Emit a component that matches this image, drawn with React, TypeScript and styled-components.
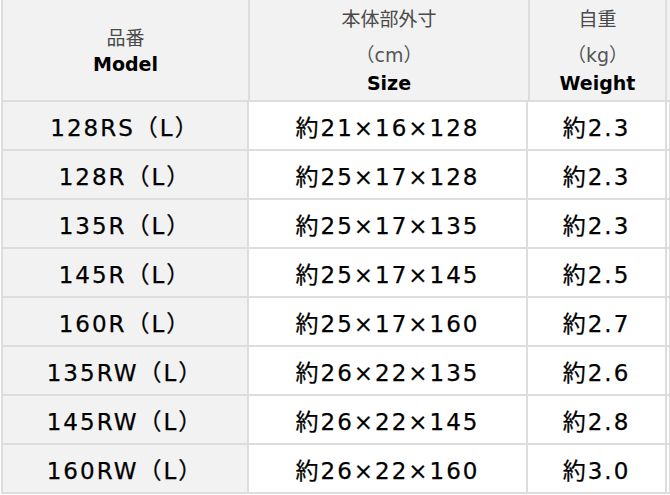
import React from "react";
import styled, { createGlobalStyle } from "styled-components";

const GlobalStyle = createGlobalStyle`
  html, body {
    margin: 0;
    padding: 0;
    background: #ffffff;
  }
  body {
    font-family: "DejaVu Sans", "Noto Sans CJK JP", sans-serif;
    overflow: hidden;
  }
`;

const rows = [
  { model: "128RS（L）", size: "約21×16×128", weight: "約2.3" },
  { model: "128R（L）", size: "約25×17×128", weight: "約2.3" },
  { model: "135R（L）", size: "約25×17×135", weight: "約2.3" },
  { model: "145R（L）", size: "約25×17×145", weight: "約2.5" },
  { model: "160R（L）", size: "約25×17×160", weight: "約2.7" },
  { model: "135RW（L）", size: "約26×22×135", weight: "約2.6" },
  { model: "145RW（L）", size: "約26×22×145", weight: "約2.8" },
  { model: "160RW（L）", size: "約26×22×160", weight: "約3.0" },
];

const Page = styled.div`
  width: 670px;
  padding-left: 1px;
  box-sizing: border-box;
`;

const Row = styled.div<{ $head?: boolean }>`
  display: grid;
  grid-template-columns: ${(p) =>
    p.$head ? "247px 280px 137px 1fr" : "246px 279px 139px 4px 1fr"};
  height: ${(p) => (p.$head ? "102px" : "49px")};
`;

const Cell = styled.div<{ $shade?: boolean }>`
  box-sizing: border-box;
  border-left: 2px solid #dddddd;
  border-bottom: 2px solid #dddddd;
  background: ${(p) => (p.$shade ? "#f2f2f2" : "#ffffff")};
  display: flex;
  align-items: center;
  justify-content: center;
  font-size: 23px;
  letter-spacing: 2px;
  color: #000000;
  -webkit-text-stroke: 0.25px #000000;
  white-space: nowrap;
`;

const HeadCell = styled.div`
  box-sizing: border-box;
  border-left: 2px solid #dddddd;
  border-bottom: 2px solid #dddddd;
  background: #f2f2f2;
  display: flex;
  flex-direction: column;
  align-items: center;
  justify-content: center;
  white-space: nowrap;
`;

const JaLabel = styled.div<{ $gap?: number }>`
  font-family: "Noto Sans CJK JP", sans-serif;
  font-size: 19px;
  line-height: 27px;
  color: #4a4a4a;
  margin-bottom: ${(p) => p.$gap ?? 0}px;
`;

const Unit = styled.div`
  font-family: "DejaVu Sans", "Noto Sans CJK JP", sans-serif;
  font-size: 19px;
  line-height: 28px;
  color: #555555;
`;

const EnLabel = styled.div`
  font-size: 19px;
  font-weight: bold;
  line-height: 28px;
  color: #000000;
`;

export default function App() {
  return (
    <Page>
      <GlobalStyle />
      <Row $head>
        <HeadCell>
          <JaLabel>品番</JaLabel>
          <EnLabel>Model</EnLabel>
        </HeadCell>
        <HeadCell>
          <JaLabel $gap={10}>本体部外寸</JaLabel>
          <Unit>（cm）</Unit>
          <EnLabel>Size</EnLabel>
        </HeadCell>
        <HeadCell>
          <JaLabel $gap={10}>自重</JaLabel>
          <Unit>（kg）</Unit>
          <EnLabel>Weight</EnLabel>
        </HeadCell>
        <HeadCell />
      </Row>
      {rows.map((r) => (
        <Row key={r.model}>
          <Cell $shade>{r.model}</Cell>
          <Cell>{r.size}</Cell>
          <Cell>{r.weight}</Cell>
          <Cell />
          <Cell />
        </Row>
      ))}
    </Page>
  );
}
